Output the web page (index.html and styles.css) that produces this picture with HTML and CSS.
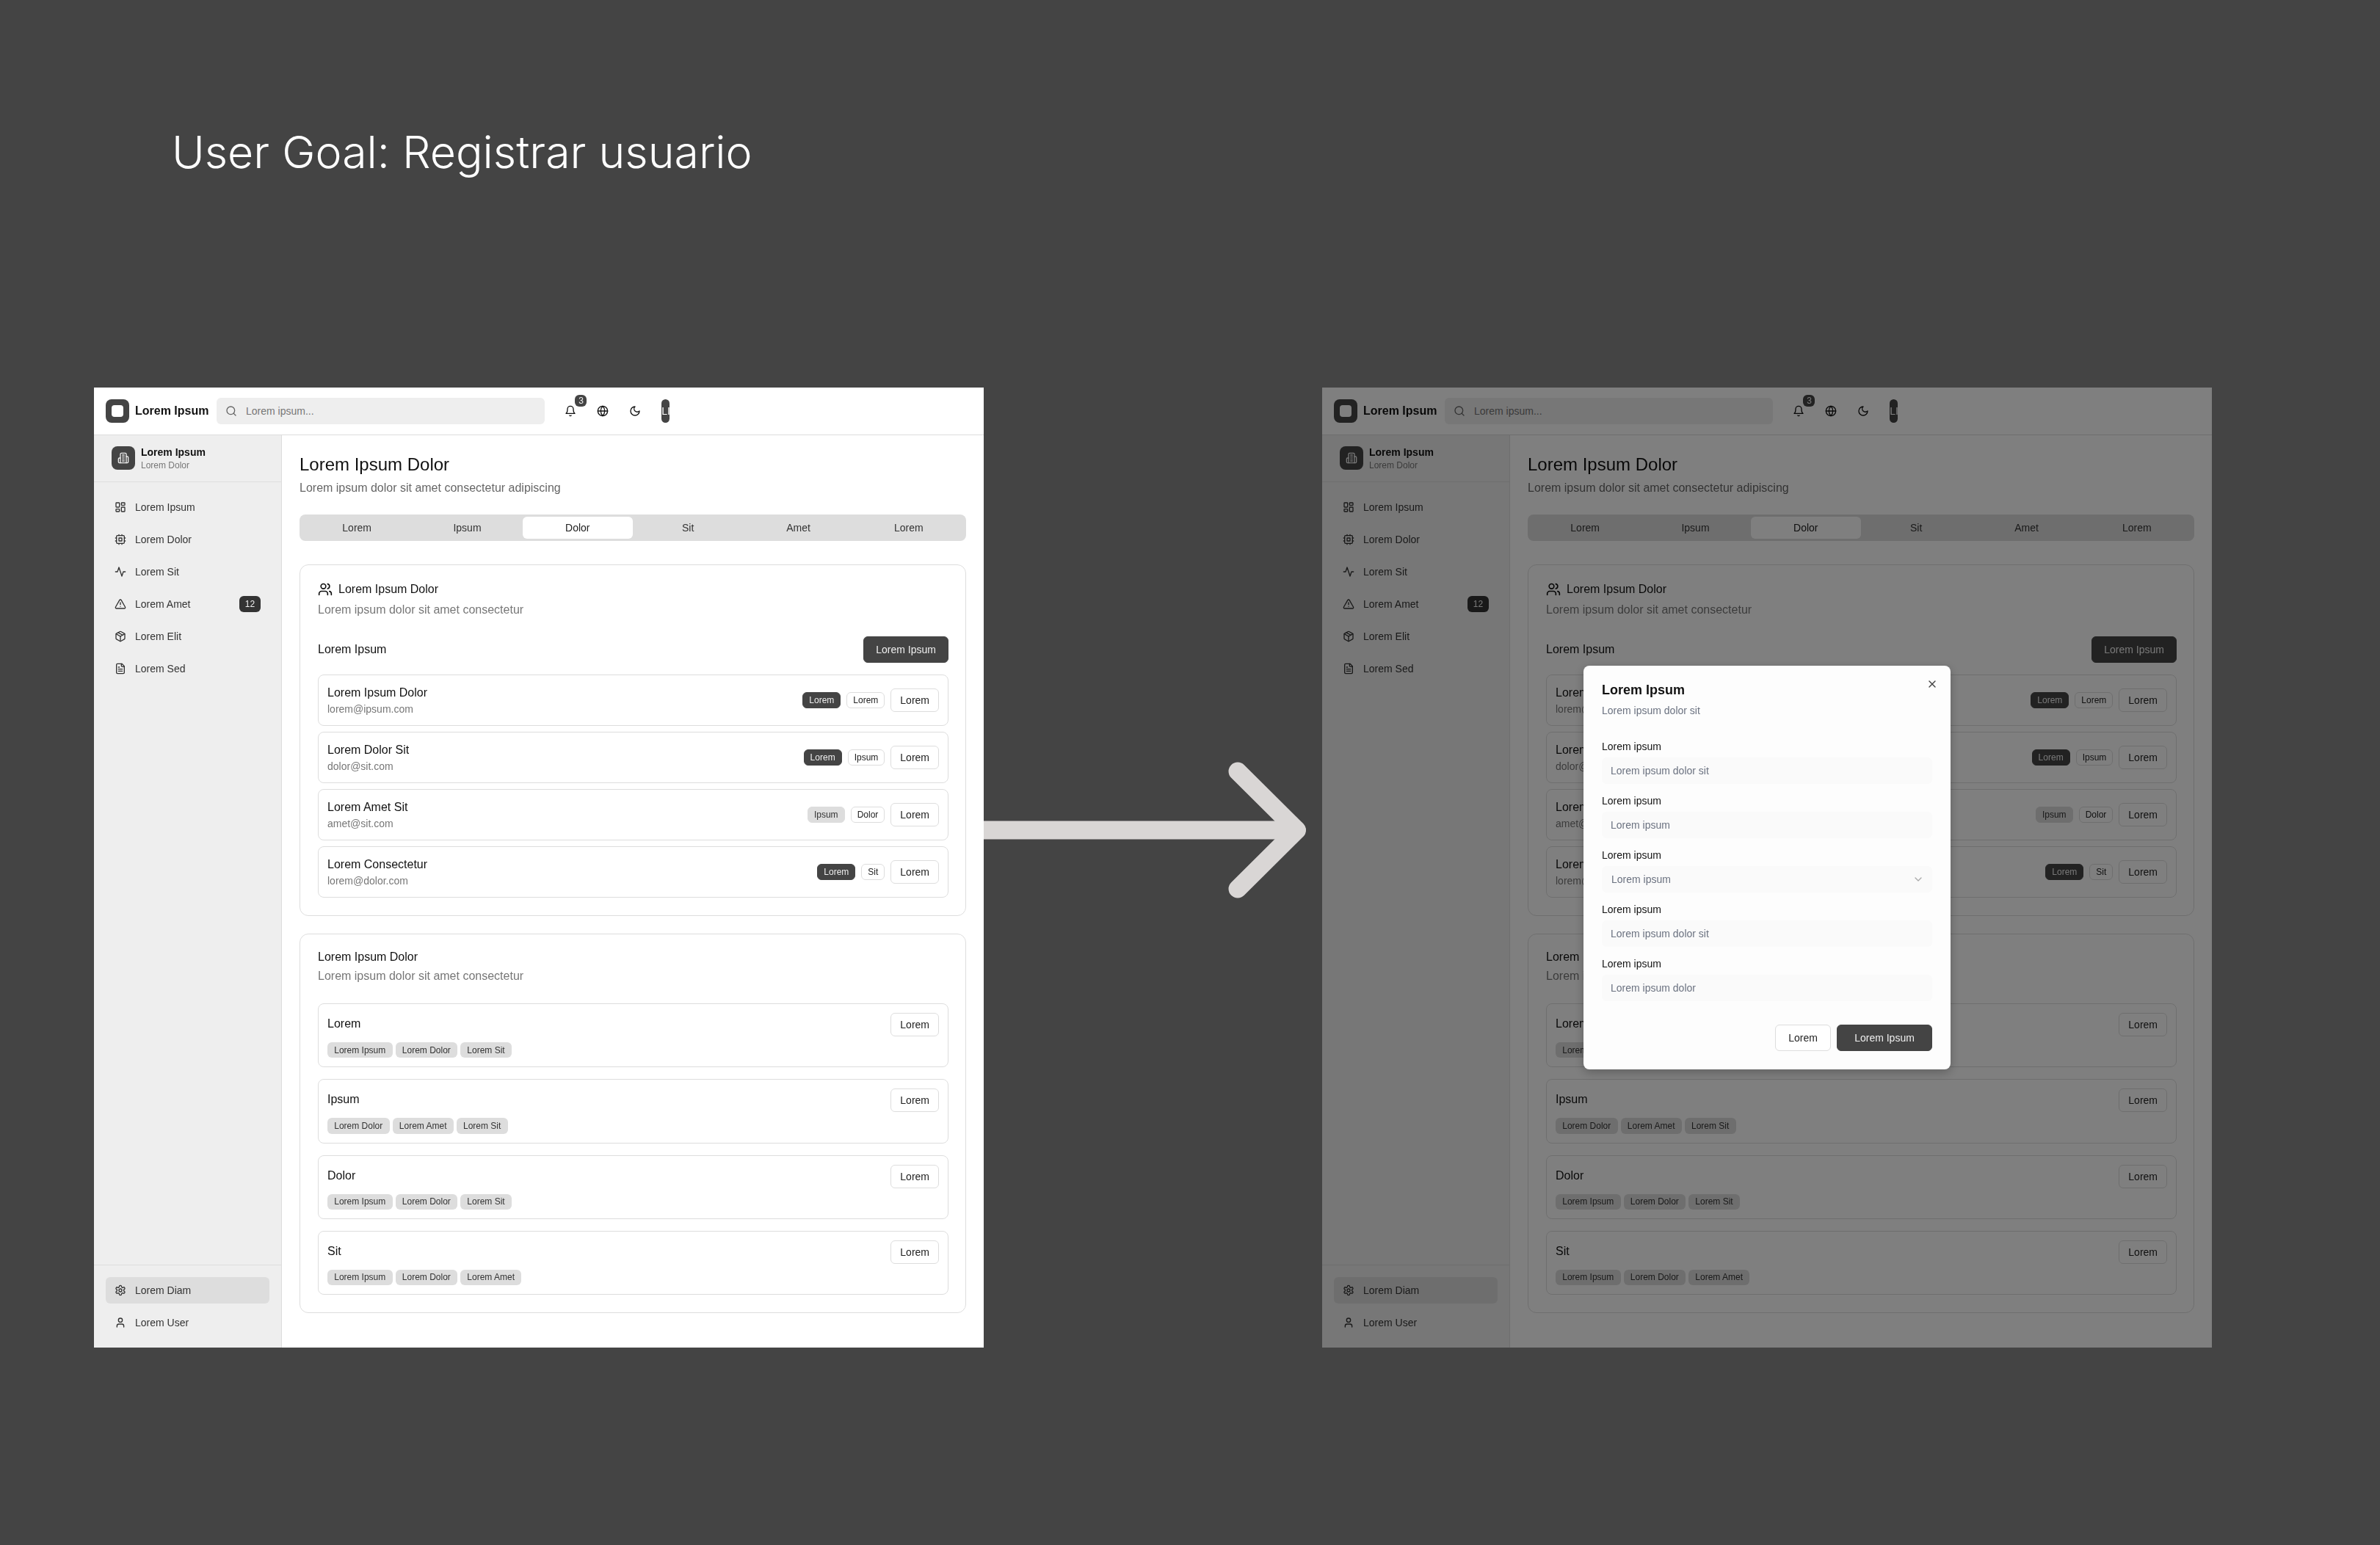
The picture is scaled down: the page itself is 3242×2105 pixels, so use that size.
FILE: index.html
```html
<!DOCTYPE html>
<html lang="es">
<head>
<meta charset="utf-8">
<title>User Goal: Registrar usuario</title>
<link rel="stylesheet" href="styles.css">
</head>
<body>
<svg class="sprite" width="0" height="0" aria-hidden="true">
  <symbol id="i-search" viewBox="0 0 24 24"><circle cx="11" cy="11" r="8"/><path d="m21 21-4.3-4.3"/></symbol>
  <symbol id="i-bell" viewBox="0 0 24 24"><path d="M6 8a6 6 0 0 1 12 0c0 7 3 9 3 9H3s3-2 3-9"/><path d="M10.3 21a1.94 1.94 0 0 0 3.4 0"/></symbol>
  <symbol id="i-globe" viewBox="0 0 24 24"><circle cx="12" cy="12" r="10"/><path d="M12 2a14.5 14.5 0 0 0 0 20 14.5 14.5 0 0 0 0-20"/><path d="M2 12h20"/></symbol>
  <symbol id="i-moon" viewBox="0 0 24 24"><path d="M12 3a6 6 0 0 0 9 9 9 9 0 1 1-9-9Z"/></symbol>
  <symbol id="i-building" viewBox="0 0 24 24"><path d="M6 22V4a2 2 0 0 1 2-2h8a2 2 0 0 1 2 2v18Z"/><path d="M6 12H4a2 2 0 0 0-2 2v6a2 2 0 0 0 2 2h2"/><path d="M18 9h2a2 2 0 0 1 2 2v9a2 2 0 0 1-2 2h-2"/><path d="M10 6h4"/><path d="M10 10h4"/><path d="M10 14h4"/><path d="M10 18h4"/></symbol>
  <symbol id="i-dash" viewBox="0 0 24 24"><rect x="3" y="3" width="7" height="9" rx="1"/><rect x="14" y="3" width="7" height="5" rx="1"/><rect x="14" y="12" width="7" height="9" rx="1"/><rect x="3" y="16" width="7" height="5" rx="1"/></symbol>
  <symbol id="i-cpu" viewBox="0 0 24 24"><rect x="4" y="4" width="16" height="16" rx="2"/><rect x="9" y="9" width="6" height="6"/><path d="M15 2v2M15 20v2M2 15h2M2 9h2M20 15h2M20 9h2M9 2v2M9 20v2"/></symbol>
  <symbol id="i-activity" viewBox="0 0 24 24"><path d="M22 12h-4l-3 9L9 3l-3 9H2"/></symbol>
  <symbol id="i-alert" viewBox="0 0 24 24"><path d="m21.73 18-8-14a2 2 0 0 0-3.48 0l-8 14A2 2 0 0 0 4 21h16a2 2 0 0 0 1.73-3"/><path d="M12 9v4"/><path d="M12 17h.01"/></symbol>
  <symbol id="i-package" viewBox="0 0 24 24"><path d="M11 21.73a2 2 0 0 0 2 0l7-4A2 2 0 0 0 21 16V8a2 2 0 0 0-1-1.73l-7-4a2 2 0 0 0-2 0l-7 4A2 2 0 0 0 3 8v8a2 2 0 0 0 1 1.73z"/><path d="M12 22V12"/><path d="M3.29 7 12 12l8.71-5"/><path d="m7.5 4.27 9 5.15"/></symbol>
  <symbol id="i-file" viewBox="0 0 24 24"><path d="M15 2H6a2 2 0 0 0-2 2v16a2 2 0 0 0 2 2h12a2 2 0 0 0 2-2V7Z"/><path d="M14 2v4a2 2 0 0 0 2 2h4"/><path d="M10 9H8"/><path d="M16 13H8"/><path d="M16 17H8"/></symbol>
  <symbol id="i-settings" viewBox="0 0 24 24"><path d="M12.22 2h-.44a2 2 0 0 0-2 2v.18a2 2 0 0 1-1 1.73l-.43.25a2 2 0 0 1-2 0l-.15-.08a2 2 0 0 0-2.73.73l-.22.38a2 2 0 0 0 .73 2.73l.15.1a2 2 0 0 1 1 1.72v.51a2 2 0 0 1-1 1.74l-.15.09a2 2 0 0 0-.73 2.73l.22.38a2 2 0 0 0 2.73.73l.15-.08a2 2 0 0 1 2 0l.43.25a2 2 0 0 1 1 1.73V20a2 2 0 0 0 2 2h.44a2 2 0 0 0 2-2v-.18a2 2 0 0 1 1-1.73l.43-.25a2 2 0 0 1 2 0l.15.08a2 2 0 0 0 2.73-.73l.22-.39a2 2 0 0 0-.73-2.73l-.15-.08a2 2 0 0 1-1-1.74v-.5a2 2 0 0 1 1-1.74l.15-.09a2 2 0 0 0 .73-2.73l-.22-.38a2 2 0 0 0-2.73-.73l-.15.08a2 2 0 0 1-2 0l-.43-.25a2 2 0 0 1-1-1.73V4a2 2 0 0 0-2-2z"/><circle cx="12" cy="12" r="3"/></symbol>
  <symbol id="i-user" viewBox="0 0 24 24"><path d="M19 21v-2a4 4 0 0 0-4-4H9a4 4 0 0 0-4 4v2"/><circle cx="12" cy="7" r="4"/></symbol>
  <symbol id="i-users" viewBox="0 0 24 24"><path d="M16 21v-2a4 4 0 0 0-4-4H6a4 4 0 0 0-4 4v2"/><circle cx="9" cy="7" r="4"/><path d="M22 21v-2a4 4 0 0 0-3-3.87"/><path d="M16 3.13a4 4 0 0 1 0 7.75"/></symbol>
  <symbol id="i-x" viewBox="0 0 24 24"><path d="M18 6 6 18"/><path d="m6 6 12 12"/></symbol>
  <symbol id="i-chev" viewBox="0 0 24 24"><path d="m6 9 6 6 6-6"/></symbol>
</svg>

<h1 class="goal">User Goal: Registrar usuario</h1>

<section class="frame frame-a">
  <div class="screen">
  <header class="topbar">
    <div class="brand-mark"><span class="brand-dot"></span></div>
    <strong class="brand-name">Lorem Ipsum</strong>
    <div class="search"><svg class="ico search-ico"><use href="#i-search"/></svg><span>Lorem ipsum...</span></div>
    <div class="tools">
      <div class="tool"><svg class="ico"><use href="#i-bell"/></svg><span class="count">3</span></div>
      <div class="tool"><svg class="ico"><use href="#i-globe"/></svg></div>
      <div class="tool"><svg class="ico"><use href="#i-moon"/></svg></div>
    </div>
    <div class="avatar"><span>LI</span></div>
  </header>
  <div class="body">
    <aside class="sidebar">
      <div class="org">
        <div class="org-mark"><svg class="ico"><use href="#i-building"/></svg></div>
        <div><div class="org-name">Lorem Ipsum</div><div class="org-sub">Lorem Dolor</div></div>
      </div>
      <nav class="nav">
        <a class="nav-item"><svg class="ico"><use href="#i-dash"/></svg><span>Lorem Ipsum</span></a>
        <a class="nav-item"><svg class="ico"><use href="#i-cpu"/></svg><span>Lorem Dolor</span></a>
        <a class="nav-item"><svg class="ico"><use href="#i-activity"/></svg><span>Lorem Sit</span></a>
        <a class="nav-item"><svg class="ico"><use href="#i-alert"/></svg><span>Lorem Amet</span><b class="nav-count">12</b></a>
        <a class="nav-item"><svg class="ico"><use href="#i-package"/></svg><span>Lorem Elit</span></a>
        <a class="nav-item"><svg class="ico"><use href="#i-file"/></svg><span>Lorem Sed</span></a>
      </nav>
      <nav class="nav nav-foot">
        <a class="nav-item is-active"><svg class="ico"><use href="#i-settings"/></svg><span>Lorem Diam</span></a>
        <a class="nav-item"><svg class="ico"><use href="#i-user"/></svg><span>Lorem User</span></a>
      </nav>
    </aside>
    <main class="main">
      <h2 class="page-title">Lorem Ipsum Dolor</h2>
      <p class="page-sub">Lorem ipsum dolor sit amet consectetur adipiscing</p>
      <div class="tabs">
        <span class="tab">Lorem</span><span class="tab">Ipsum</span><span class="tab is-on">Dolor</span><span class="tab">Sit</span><span class="tab">Amet</span><span class="tab">Lorem</span>
      </div>
      <section class="card">
        <h3 class="card-title card-title-icon"><svg class="ico ico-20"><use href="#i-users"/></svg>Lorem Ipsum Dolor</h3>
        <p class="card-sub">Lorem ipsum dolor sit amet consectetur</p>
        <div class="toolbar"><span class="toolbar-label">Lorem Ipsum</span><span class="btn btn-primary">Lorem Ipsum</span></div>
        <div class="people">
          <div class="person"><div class="person-info"><div class="person-name">Lorem Ipsum Dolor</div><div class="person-mail">lorem@ipsum.com</div></div><span class="tag tag-dark">Lorem</span><span class="tag">Lorem</span><span class="btn btn-small">Lorem</span></div>
          <div class="person"><div class="person-info"><div class="person-name">Lorem Dolor Sit</div><div class="person-mail">dolor@sit.com</div></div><span class="tag tag-dark">Lorem</span><span class="tag">Ipsum</span><span class="btn btn-small">Lorem</span></div>
          <div class="person"><div class="person-info"><div class="person-name">Lorem Amet Sit</div><div class="person-mail">amet@sit.com</div></div><span class="tag tag-gray">Ipsum</span><span class="tag">Dolor</span><span class="btn btn-small">Lorem</span></div>
          <div class="person"><div class="person-info"><div class="person-name">Lorem Consectetur</div><div class="person-mail">lorem@dolor.com</div></div><span class="tag tag-dark">Lorem</span><span class="tag">Sit</span><span class="btn btn-small">Lorem</span></div>
        </div>
      </section>
      <section class="card">
        <h3 class="card-title card-title-plain">Lorem Ipsum Dolor</h3>
        <p class="card-sub card-sub-tight">Lorem ipsum dolor sit amet consectetur</p>
        <div class="roles">
          <div class="role"><div class="role-top"><span class="role-name">Lorem</span><span class="btn btn-small">Lorem</span></div><div class="chips"><span class="chip">Lorem Ipsum</span><span class="chip">Lorem Dolor</span><span class="chip">Lorem Sit</span></div></div>
          <div class="role"><div class="role-top"><span class="role-name">Ipsum</span><span class="btn btn-small">Lorem</span></div><div class="chips"><span class="chip">Lorem Dolor</span><span class="chip">Lorem Amet</span><span class="chip">Lorem Sit</span></div></div>
          <div class="role"><div class="role-top"><span class="role-name">Dolor</span><span class="btn btn-small">Lorem</span></div><div class="chips"><span class="chip">Lorem Ipsum</span><span class="chip">Lorem Dolor</span><span class="chip">Lorem Sit</span></div></div>
          <div class="role"><div class="role-top"><span class="role-name">Sit</span><span class="btn btn-small">Lorem</span></div><div class="chips"><span class="chip">Lorem Ipsum</span><span class="chip">Lorem Dolor</span><span class="chip">Lorem Amet</span></div></div>
        </div>
      </section>
    </main>
  </div>
  </div>
</section>

<svg class="arrow" width="460" height="200" viewBox="0 0 460 200" aria-hidden="true">
  <path d="M0 100H426"/>
  <path d="M346 20 426.500 100 346 180"/>
</svg>

<section class="frame frame-b">
  <div class="screen">
  <header class="topbar">
    <div class="brand-mark"><span class="brand-dot"></span></div>
    <strong class="brand-name">Lorem Ipsum</strong>
    <div class="search"><svg class="ico search-ico"><use href="#i-search"/></svg><span>Lorem ipsum...</span></div>
    <div class="tools">
      <div class="tool"><svg class="ico"><use href="#i-bell"/></svg><span class="count">3</span></div>
      <div class="tool"><svg class="ico"><use href="#i-globe"/></svg></div>
      <div class="tool"><svg class="ico"><use href="#i-moon"/></svg></div>
    </div>
    <div class="avatar"><span>LI</span></div>
  </header>
  <div class="body">
    <aside class="sidebar">
      <div class="org">
        <div class="org-mark"><svg class="ico"><use href="#i-building"/></svg></div>
        <div><div class="org-name">Lorem Ipsum</div><div class="org-sub">Lorem Dolor</div></div>
      </div>
      <nav class="nav">
        <a class="nav-item"><svg class="ico"><use href="#i-dash"/></svg><span>Lorem Ipsum</span></a>
        <a class="nav-item"><svg class="ico"><use href="#i-cpu"/></svg><span>Lorem Dolor</span></a>
        <a class="nav-item"><svg class="ico"><use href="#i-activity"/></svg><span>Lorem Sit</span></a>
        <a class="nav-item"><svg class="ico"><use href="#i-alert"/></svg><span>Lorem Amet</span><b class="nav-count">12</b></a>
        <a class="nav-item"><svg class="ico"><use href="#i-package"/></svg><span>Lorem Elit</span></a>
        <a class="nav-item"><svg class="ico"><use href="#i-file"/></svg><span>Lorem Sed</span></a>
      </nav>
      <nav class="nav nav-foot">
        <a class="nav-item is-active"><svg class="ico"><use href="#i-settings"/></svg><span>Lorem Diam</span></a>
        <a class="nav-item"><svg class="ico"><use href="#i-user"/></svg><span>Lorem User</span></a>
      </nav>
    </aside>
    <main class="main">
      <h2 class="page-title">Lorem Ipsum Dolor</h2>
      <p class="page-sub">Lorem ipsum dolor sit amet consectetur adipiscing</p>
      <div class="tabs">
        <span class="tab">Lorem</span><span class="tab">Ipsum</span><span class="tab is-on">Dolor</span><span class="tab">Sit</span><span class="tab">Amet</span><span class="tab">Lorem</span>
      </div>
      <section class="card">
        <h3 class="card-title card-title-icon"><svg class="ico ico-20"><use href="#i-users"/></svg>Lorem Ipsum Dolor</h3>
        <p class="card-sub">Lorem ipsum dolor sit amet consectetur</p>
        <div class="toolbar"><span class="toolbar-label">Lorem Ipsum</span><span class="btn btn-primary">Lorem Ipsum</span></div>
        <div class="people">
          <div class="person"><div class="person-info"><div class="person-name">Lorem Ipsum Dolor</div><div class="person-mail">lorem@ipsum.com</div></div><span class="tag tag-dark">Lorem</span><span class="tag">Lorem</span><span class="btn btn-small">Lorem</span></div>
          <div class="person"><div class="person-info"><div class="person-name">Lorem Dolor Sit</div><div class="person-mail">dolor@sit.com</div></div><span class="tag tag-dark">Lorem</span><span class="tag">Ipsum</span><span class="btn btn-small">Lorem</span></div>
          <div class="person"><div class="person-info"><div class="person-name">Lorem Amet Sit</div><div class="person-mail">amet@sit.com</div></div><span class="tag tag-gray">Ipsum</span><span class="tag">Dolor</span><span class="btn btn-small">Lorem</span></div>
          <div class="person"><div class="person-info"><div class="person-name">Lorem Consectetur</div><div class="person-mail">lorem@dolor.com</div></div><span class="tag tag-dark">Lorem</span><span class="tag">Sit</span><span class="btn btn-small">Lorem</span></div>
        </div>
      </section>
      <section class="card">
        <h3 class="card-title card-title-plain">Lorem Ipsum Dolor</h3>
        <p class="card-sub card-sub-tight">Lorem ipsum dolor sit amet consectetur</p>
        <div class="roles">
          <div class="role"><div class="role-top"><span class="role-name">Lorem</span><span class="btn btn-small">Lorem</span></div><div class="chips"><span class="chip">Lorem Ipsum</span><span class="chip">Lorem Dolor</span><span class="chip">Lorem Sit</span></div></div>
          <div class="role"><div class="role-top"><span class="role-name">Ipsum</span><span class="btn btn-small">Lorem</span></div><div class="chips"><span class="chip">Lorem Dolor</span><span class="chip">Lorem Amet</span><span class="chip">Lorem Sit</span></div></div>
          <div class="role"><div class="role-top"><span class="role-name">Dolor</span><span class="btn btn-small">Lorem</span></div><div class="chips"><span class="chip">Lorem Ipsum</span><span class="chip">Lorem Dolor</span><span class="chip">Lorem Sit</span></div></div>
          <div class="role"><div class="role-top"><span class="role-name">Sit</span><span class="btn btn-small">Lorem</span></div><div class="chips"><span class="chip">Lorem Ipsum</span><span class="chip">Lorem Dolor</span><span class="chip">Lorem Amet</span></div></div>
        </div>
      </section>
    </main>
  </div>
  </div>
  <div class="overlay"></div>
  <div class="modal">
    <svg class="ico modal-close"><use href="#i-x"/></svg>
    <h4 class="modal-title">Lorem Ipsum</h4>
    <p class="modal-sub">Lorem ipsum dolor sit</p>
    <div class="fields">
      <div class="field"><label class="field-label">Lorem ipsum</label><div class="input">Lorem ipsum dolor sit</div></div>
      <div class="field"><label class="field-label">Lorem ipsum</label><div class="input">Lorem ipsum</div></div>
      <div class="field"><label class="field-label">Lorem ipsum</label><div class="input input-select"><span>Lorem ipsum</span><svg class="ico chev"><use href="#i-chev"/></svg></div></div>
      <div class="field"><label class="field-label">Lorem ipsum</label><div class="input">Lorem ipsum dolor sit</div></div>
      <div class="field"><label class="field-label">Lorem ipsum</label><div class="input">Lorem ipsum dolor</div></div>
    </div>
    <div class="modal-actions"><span class="btn btn-cancel">Lorem</span><span class="btn btn-primary btn-wide">Lorem Ipsum</span></div>
  </div>
</section>
</body>
</html>
```
FILE: styles.css
```css
* { box-sizing: border-box; }
html, body { margin: 0; padding: 0; }
body {
  position: relative;
  width: 3242px;
  height: 2105px;
  overflow: hidden;
  background: #444444;
  font-family: "Liberation Sans", Arial, sans-serif;
  color: #111111;
}
h1, h2, h3, h4, p { margin: 0; font-weight: 400; }
.sprite { position: absolute; }
.goal {
  position: absolute;
  left: 234px;
  top: 168px;
  font-family: Inter, sans-serif;
  font-size: 60.800px;
  line-height: 78px;
  font-weight: 300;
  color: #ffffff;
  white-space: nowrap;
}
.arrow { position: absolute; left: 1340px; top: 1031px; }
.arrow path {
  fill: none;
  stroke: #d9d6d5;
  stroke-width: 25;
  stroke-linecap: round;
  stroke-linejoin: round;
}
.frame {
  position: absolute;
  top: 528px;
  width: 1212px;
  height: 1308px;
  background: #ffffff;
  overflow: hidden;
}
.frame-a { left: 128px; }
.frame-b { left: 1801px; }
.screen {
  height: 100%;
  display: flex;
  flex-direction: column;
  filter: blur(0.35px);
}
.ico {
  width: 16px;
  height: 16px;
  flex: none;
  fill: none;
  stroke: currentColor;
  stroke-width: 2;
  stroke-linecap: round;
  stroke-linejoin: round;
}
.ico-20 { width: 20px; height: 20px; }

.topbar {
  display: flex;
  align-items: center;
  height: 65px;
  flex: none;
  padding: 0 16px;
  border-bottom: 1px solid #dddddd;
}
.brand-mark {
  width: 32px;
  height: 32px;
  border-radius: 8px;
  background: #444444;
  display: flex;
  align-items: center;
  justify-content: center;
}
.brand-dot { width: 16px; height: 16px; border-radius: 4px; background: #ffffff; }
.brand-name { margin-left: 8px; font-size: 16px; line-height: 24px; font-weight: 700; white-space: nowrap; }
.search {
  position: relative;
  margin-left: 10.500px;
  width: 447.500px;
  height: 36px;
  border-radius: 6px;
  background: #eeeeee;
  padding-left: 40px;
  display: flex;
  align-items: center;
  font-size: 14px;
  color: #777777;
}
.search-ico { position: absolute; left: 12px; top: 10px; color: #666666; }
.tools { display: flex; gap: 8px; margin-left: 17px; }
.tool {
  position: relative;
  width: 36px;
  height: 36px;
  display: flex;
  align-items: center;
  justify-content: center;
}
.count {
  position: absolute;
  top: -4px;
  right: -4px;
  width: 16px;
  height: 16px;
  border-radius: 6px;
  background: #444444;
  color: #eeeeee;
  font-size: 12px;
  line-height: 16px;
  text-align: center;
}
.avatar {
  margin-left: 18px;
  width: 11px;
  height: 32px;
  border-radius: 6px;
  background: #444444;
  color: #ffffff;
  font-size: 14px;
  display: flex;
  align-items: center;
  justify-content: center;
  overflow: hidden;
}

.body { flex: 1; min-height: 0; display: grid; grid-template-columns: 256px 956px; }
.sidebar {
  background: #eeeeee;
  border-right: 1px solid #dddddd;
  display: flex;
  flex-direction: column;
  min-height: 0;
}
.org {
  display: flex;
  gap: 8px;
  align-items: flex-start;
  height: 64px;
  padding: 15px 24px 0;
  border-bottom: 1px solid #dddddd;
  flex: none;
}
.org-mark {
  width: 32px;
  height: 32px;
  border-radius: 8px;
  background: #444444;
  color: #eeeeee;
  display: flex;
  align-items: center;
  justify-content: center;
}
.org-name { font-size: 14px; line-height: 17px; font-weight: 700; }
.org-sub { margin-top: 1px; font-size: 12px; line-height: 16px; color: #777777; }
.nav { padding: 16px; display: flex; flex-direction: column; gap: 8px; }
.nav-foot { margin-top: auto; border-top: 1px solid #dddddd; }
.nav-item {
  height: 36px;
  padding: 0 12px;
  border-radius: 6px;
  display: flex;
  align-items: center;
  gap: 12px;
  font-size: 14px;
  color: #333333;
}
.nav-item.is-active { background: #dddddd; }
.nav-count {
  margin-left: auto;
  min-width: 29px;
  height: 22px;
  border-radius: 6px;
  background: #333333;
  color: #eeeeee;
  font-size: 12px;
  font-weight: 400;
  line-height: 22px;
  text-align: center;
}

.main { padding: 24px; overflow: hidden; }
.page-title { font-size: 24px; line-height: 32px; }
.page-sub { margin-top: 4px; font-size: 16px; line-height: 24px; color: #666666; }
.tabs {
  margin-top: 24px;
  height: 36px;
  padding: 3px;
  border-radius: 8px;
  background: #dddddd;
  display: grid;
  grid-template-columns: repeat(6, 1fr);
}
.tab { display: flex; align-items: center; justify-content: center; font-size: 14px; color: #333333; border-radius: 6px; }
.tab.is-on { background: #ffffff; color: #222222; }

.card {
  margin-top: 32px;
  padding: 16px 23px 24px 24px;
  border: 1px solid #dddddd;
  border-radius: 12px;
}
.card + .card { margin-top: 24px; }
.card-title { font-size: 16px; line-height: 24px; display: flex; align-items: center; gap: 8px; }
.card-title-icon { padding-top: 5px; }
.card-title-plain { padding-top: 3px; }
.card-sub { margin-top: 4px; font-size: 16px; line-height: 24px; color: #777777; }
.card-sub-tight { margin-top: 2px; }
.toolbar { margin-top: 24px; display: flex; align-items: center; justify-content: space-between; }
.toolbar-label { font-size: 16px; line-height: 24px; }
.btn {
  display: inline-flex;
  align-items: center;
  justify-content: center;
  flex: none;
  font-size: 14px;
  border-radius: 6px;
  border: 1px solid #dddddd;
  background: #ffffff;
  color: #222222;
  white-space: nowrap;
}
.btn-primary { height: 36px; padding: 0 16px; background: #444444; border-color: #444444; color: #eeeeee; }
.btn-small { height: 32px; padding: 0 12px; }
.people { margin-top: 16px; display: flex; flex-direction: column; gap: 8px; }
.person {
  height: 70px;
  padding: 12px;
  border: 1px solid #dddddd;
  border-radius: 8px;
  display: flex;
  align-items: center;
  gap: 8px;
}
.person-info { flex: 1; }
.person-name { font-size: 16px; line-height: 24px; }
.person-mail { font-size: 14px; line-height: 20px; color: #777777; }
.tag {
  flex: none;
  padding: 2px 8px;
  font-size: 12px;
  line-height: 16px;
  border: 1px solid #dddddd;
  border-radius: 6px;
  background: #ffffff;
  color: #222222;
}
.tag-dark { background: #444444; border-color: #444444; color: #eeeeee; }
.tag-gray { background: #dddddd; border-color: #dddddd; color: #333333; }

.roles { margin-top: 25px; display: flex; flex-direction: column; gap: 16px; }
.role {
  padding: 12px;
  border: 1px solid #dddddd;
  border-radius: 8px;
}
.role-top { display: flex; justify-content: space-between; align-items: flex-start; }
.role-name { padding-top: 3px; font-size: 16px; line-height: 24px; }
.chips { margin-top: 8px; display: flex; gap: 4px; }
.chip {
  padding: 2.650px 9.250px;
  font-size: 12px;
  line-height: 16px;
  border-radius: 6px;
  background: #dddddd;
  color: #333333;
}

.overlay { position: absolute; inset: 0; background: rgba(0, 0, 0, 0.5); }
.modal {
  position: absolute;
  left: 356px;
  top: 379px;
  width: 500px;
  height: 550px;
  padding: 21px 25px 25px;
  border-radius: 8px;
  background: #fdfdfd;
  box-shadow: 0 4px 14px rgba(0, 0, 0, 0.25);
  filter: blur(0.35px);
}
.modal-close { position: absolute; right: 17px; top: 17px; color: #444444; }
.modal-title { font-size: 18px; line-height: 24px; font-weight: 700; color: #111111; }
.modal-sub { margin-top: 6px; font-size: 14px; line-height: 20px; color: #6b7280; }
.fields { margin-top: 29px; display: flex; flex-direction: column; gap: 13px; }
.field { display: flex; flex-direction: column; gap: 5px; }
.field-label { font-size: 14px; line-height: 20px; color: #111111; }
.input {
  height: 36px;
  padding: 0 12px;
  border-radius: 6px;
  background: #fafafa;
  display: flex;
  align-items: center;
  font-size: 14px;
  color: #6b7280;
}
.input-select { justify-content: space-between; padding-left: 13px; }
.chev { color: #aaaaaa; margin-right: -1px; }
.modal-actions { margin-top: 32px; display: flex; justify-content: flex-end; gap: 8px; }
.btn-cancel { height: 36px; width: 76px; }
.btn-wide { width: 130px; padding: 0; }
```
